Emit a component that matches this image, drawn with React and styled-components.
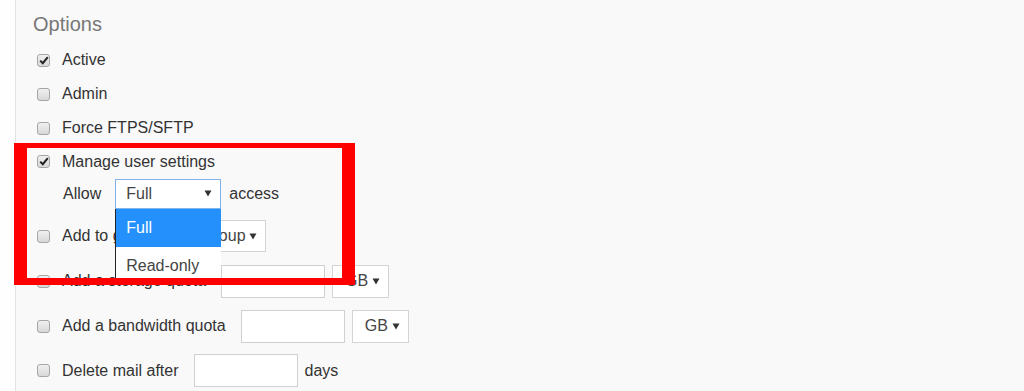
import React from "react";
import styled, { createGlobalStyle } from "styled-components";

const Global = createGlobalStyle`
  html, body { margin: 0; padding: 0; background: #fdfdfd; }
  body { font-family: "Liberation Sans", Arial, sans-serif; color: #333; }
`;

const Page = styled.div`
  position: relative;
  display: flex;
  width: 1024px;
  height: 391px;
  overflow: hidden;
  background: #fdfdfd;
`;

const Gutter = styled.div`
  width: 15px;
  flex: none;
  border-right: 1px solid #e2e2e2;
  background: #fefefe;
`;

const Content = styled.div`
  flex: 1;
  background: #f9f9f9;
  padding-left: 17px;
  display: flex;
  flex-direction: column;
`;

const Heading = styled.div`
  height: 43px;
  display: flex;
  align-items: center;
  font-size: 20px;
  color: #777;
  padding-top: 5px;
  box-sizing: border-box;
  flex: none;
`;

const Row = styled.div`
  height: ${(p) => p.$h}px;
  margin-top: ${(p) => p.$mt || 0}px;
  display: flex;
  align-items: center;
  padding-left: ${(p) => p.$indent || 4}px;
  font-size: 16px;
  color: #333;
  flex: none;
`;

const Box = styled.span`
  width: 11px;
  height: 11px;
  border: 1px solid #a6a6a6;
  border-radius: 3px;
  background: linear-gradient(#f0f0f0, #d8d8d8);
  display: flex;
  align-items: center;
  justify-content: center;
  margin-right: 12px;
  flex: none;
`;

const Label = styled.span`
  margin-right: ${(p) => p.$gap || 0}px;
  white-space: nowrap;
`;

const SelectWrap = styled.div`
  position: relative;
  margin-right: ${(p) => p.$gap || 0}px;
`;

const Select = styled.div`
  box-sizing: border-box;
  width: ${(p) => p.$w}px;
  height: ${(p) => p.$h}px;
  background: #fff;
  border: 1px solid ${(p) => (p.$focus ? "#7fb3ec" : "#d4d4d4")};
  display: flex;
  align-items: center;
  justify-content: space-between;
  padding: 0 8px 0 ${(p) => p.$pl || 10}px;
  font-size: 16px;
  color: #444;
`;

const Input = styled.div`
  box-sizing: border-box;
  width: 104px;
  height: 33px;
  background: #fff;
  border: 1px solid #d0d0d0;
  margin-right: 7px;
`;

const Menu = styled.div`
  position: absolute;
  left: 0;
  top: 100%;
  width: 106px;
  background: #fff;
  border-left: 1px solid #222;
  box-sizing: border-box;
  z-index: 5;
`;

const Option = styled.div`
  height: 38px;
  display: flex;
  align-items: center;
  padding-left: 10px;
  font-size: 16px;
  background: ${(p) => (p.$active ? "#2490fc" : "#fff")};
  color: ${(p) => (p.$active ? "#fff" : "#444")};
`;

const Annotation = styled.div`
  position: absolute;
  left: 14px;
  top: 143px;
  width: 341px;
  height: 142px;
  box-sizing: border-box;
  border-style: solid;
  border-color: #ff0000;
  border-width: 5px 13px 7px 13px;
  z-index: 10;
  pointer-events: none;
`;

const Arrow = () => (
  <svg width="8" height="7" viewBox="0 0 8 7">
    <path d="M0.5 0.5 L7.5 0.5 L4 6.5 Z" fill="#333" />
  </svg>
);

const Check = ({ checked }) => (
  <Box>
    {checked && (
      <svg width="10" height="9" viewBox="0 0 10 9">
        <path d="M1.2 4.6 L3.8 7.2 L8.8 1.2" fill="none" stroke="#222" strokeWidth="2" />
      </svg>
    )}
  </Box>
);

export default function App() {
  return (
    <>
      <Global />
      <Page>
        <Gutter />
        <Content>
          <Heading>Options</Heading>
          <Row $h={34}>
            <Check checked />
            <Label>Active</Label>
          </Row>
          <Row $h={34}>
            <Check />
            <Label>Admin</Label>
          </Row>
          <Row $h={34}>
            <Check />
            <Label>Force FTPS/SFTP</Label>
          </Row>
          <Row $h={33}>
            <Check checked />
            <Label>Manage user settings</Label>
          </Row>
          <Row $h={31} $indent={30}>
            <Label $gap={14}>Allow</Label>
            <SelectWrap $gap={8}>
              <Select $w={106} $h={30} $focus>
                <span>Full</span>
                <Arrow />
              </Select>
              <Menu>
                <Option $active>Full</Option>
                <Option>Read-only</Option>
              </Menu>
            </SelectWrap>
            <Label>access</Label>
          </Row>
          <Row $h={44} $mt={5}>
            <Check />
            <Label $gap={8}>Add to group</Label>
            <Select $w={104} $h={32}>
              <span>Any group</span>
              <Arrow />
            </Select>
          </Row>
          <Row $h={46}>
            <Check />
            <Label $gap={15}>Add a storage quota</Label>
            <Input />
            <Select $w={57} $h={33} $pl={12}>
              <span>GB</span>
              <Arrow />
            </Select>
          </Row>
          <Row $h={44}>
            <Check />
            <Label $gap={15}>Add a bandwidth quota</Label>
            <Input />
            <Select $w={57} $h={33} $pl={12}>
              <span>GB</span>
              <Arrow />
            </Select>
          </Row>
          <Row $h={45}>
            <Check />
            <Label $gap={15}>Delete mail after</Label>
            <Input />
            <Label>days</Label>
          </Row>
        </Content>
        <Annotation />
      </Page>
    </>
  );
}
